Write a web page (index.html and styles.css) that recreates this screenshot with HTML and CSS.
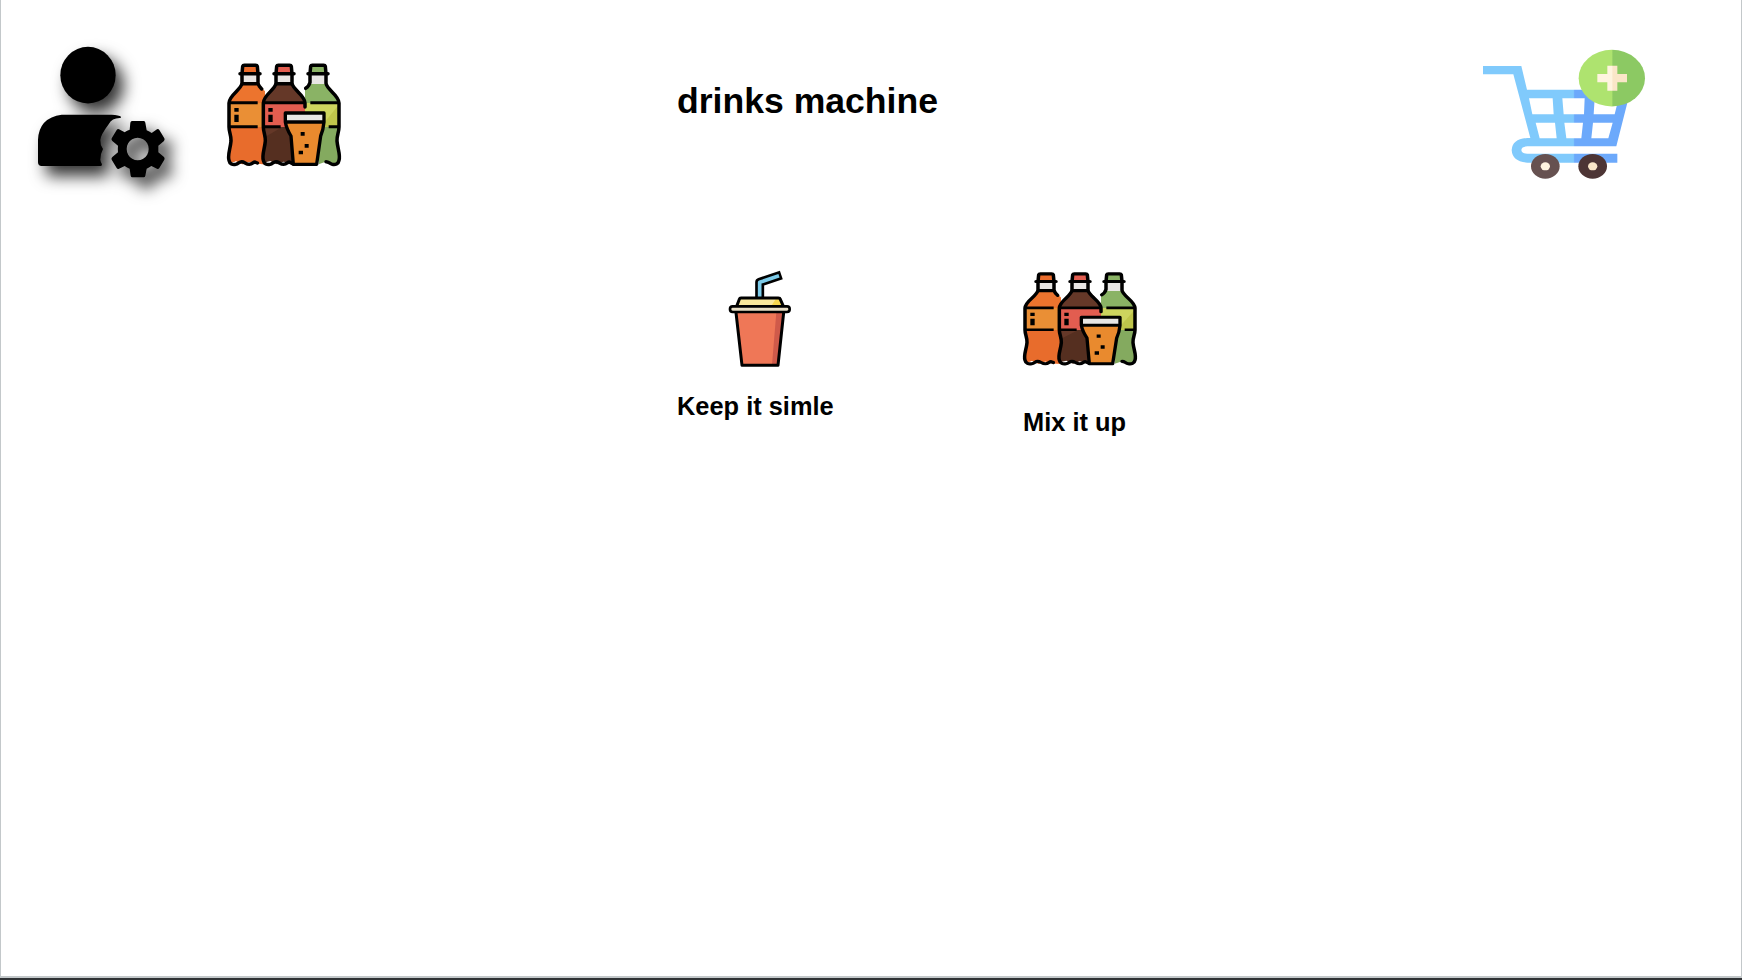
FILE: index.html
```html
<!DOCTYPE html>
<html lang="en">
<head>
<meta charset="utf-8">
<title>drinks machine</title>
<link rel="stylesheet" href="styles.css">
</head>
<body>
<svg class="sprite" aria-hidden="true">
  <symbol id="bottles" viewBox="0 0 420 390" preserveAspectRatio="none">
    <g stroke="none">
      <path fill="#ea6c2c" d="M82 46h46v27H82z"/>
      <path fill="#e8e6e4" d="M84 75h42v27H84z"/>
      <path fill="#ec742e" d="M80 102h50l20 22v219l-30-2-17-6-20 8-20-10-18 7-6-24 6-45-5-40v-75l15-22z"/>
      <path fill="#e86c2c" d="M44 231h106v112l-30-2-17-6-20 8-20-10-18 7-4-24 6-45z"/>
      <path fill="#ea8f35" d="M44 159h102v72H44z"/>
      <path fill="#e25d50" d="M184 46h46v27h-46z"/>
      <path fill="#e8e6e4" d="M185 75h43v27h-43z"/>
      <path fill="#653828" d="M182 102h50l20 20 16 37H144l14-30z"/>
      <path fill="#e25d50" d="M146 159h124v72H146z"/>
      <path fill="#552f20" d="M146 231h90v112l-30-8-20 8-20-10-20 5-1-20 6-40z"/>
      <path fill="#653828" d="M146 231h56l-56 32z"/>
      <path fill="#8ab365" d="M286 46h46v27h-46zM284 102h50l20 22 17 35H270v-38z"/>
      <path fill="#e8e6e4" d="M287 75h43v27h-43z"/>
      <path fill="#cdd45e" d="M270 159h101v72H270z"/>
      <path fill="#bfc54b" d="M371 165v66h-54z"/>
      <path fill="#84aa5f" d="M315 231h56l-5 37 6 70-18 5-18-9-25 9z"/>
    </g>
    <g fill="none" stroke="#000" stroke-width="10.500" stroke-linecap="round" stroke-linejoin="round">
      <path d="M81 71l2-22q1-3 5-3h34q4 0 5 3l2 22M75 71h60M82 101h46"/>
      <path d="M183 71l2-22q1-3 5-3h34q4 0 5 3l2 22M177 71h60M184 101h46"/>
      <path d="M285 71l2-22q1-3 5-3h34q4 0 5 3l2 22M279 71h60"/>
      <path d="M81 75v25C78 120 42 135 42 159v72c0 16 7 25 6 42-2 24-11 42-6 58 2 11 11 14 20 12 9-2 10-8 18-8 9 0 12 8 23 8 10 0 11-7 17-7l7 3M129 75v25c2 8 6 12 11 17"/>
      <path d="M183 75v25C180 120 145 135 145 159v72c0 16 7 25 6 42-2 24-11 42-6 58 2 11 11 14 20 12 9-2 10-8 18-8 9 0 12 8 23 8 10 0 11-7 17-7l8 4M231 75v25c3 20 39 35 39 59v12"/>
      <path d="M285 75v22q-3 12-13 18M333 75v25c3 20 39 35 39 59v72c0 16-7 25-6 42 2 24 11 42 6 58-2 11-11 14-20 12-9-2-10-8-19-8"/>
    </g>
    <path fill="#e98a2e" d="M215 216h111l-8 38-10 89h-74l-9-89z"/>
    <path fill="#e8e6e4" d="M212 189h114v26H212z"/>
    <path fill="none" stroke="#000" stroke-width="10" stroke-linejoin="round" d="M211 189h116v27q-2 23-10 42l-12 85h-70l-7-85q-14-23-17-42zM211 216h116"/>
    <path d="M43 154h85v9H43zM144 154h126v9H144zM286 154h85v9h-85zM43 226h85v9H43zM144 226h53v9h-53zM341 226h30v9h-30zM58 174h13v11H58zM58 194h13v22H58zM160 174h13v11h-13zM160 194h13v22h-13zM257 246h12v11h-12zM269 282h12v11h-12zM251 302h13v11h-13z"/>
  </symbol>
</svg>

<main class="screen">
  <header class="topbar">
    <svg class="admin-icon" viewBox="0 0 510 540">
      <ellipse cx="204" cy="135.500" rx="83" ry="85"/>
      <path d="M125 254h150q22 1 28 6l-1 4q-26-1-36 19-24 32-25 47-1 14 8 27-9 17-8 32 1 8 5 14l-2 5H65q-11 0-11-11v-68q3-66 71-75z"/>
      <path fill-rule="evenodd" d="M336 273h35q5 0 5 5l4 23q8 3 15 8l16-11q4-2 7 2l15 25q2 4-1 8l-17 14v20l17 14q3 3 1 8l-15 25q-3 4-7 2l-17-8q-7 5-14 8l-4 21q-1 5-5 5h-34q-4 0-5-5l-3-21q-8-3-15-8l-17 8q-4 2-7-2l-15-25q-2-5 2-8l17-14q-1-10 0-20l-17-14q-4-3-2-8l15-25q3-4 7-2l17 9q7-6 15-8l2-21q1-5 5-5zM353 323a33 34 0 1 0 .1 0z"/>
    </svg>
    <svg class="brand-icon"><use href="#bottles"/></svg>
    <h1 class="title">drinks machine</h1>
    <svg class="cart-icon" viewBox="0 0 570 465">
      <defs>
        <linearGradient id="blue" gradientUnits="userSpaceOnUse" x1="310" y1="0" x2="314" y2="0">
          <stop offset="0" stop-color="#80cafc"/><stop offset="1" stop-color="#6ca9fb"/>
        </linearGradient>
        <linearGradient id="green" gradientUnits="userSpaceOnUse" x1="425" y1="0" x2="429" y2="0">
          <stop offset="0" stop-color="#aee36f"/><stop offset="1" stop-color="#8cc963"/>
        </linearGradient>
        <linearGradient id="cream" gradientUnits="userSpaceOnUse" x1="425" y1="0" x2="429" y2="0">
          <stop offset="0" stop-color="#fff4df"/><stop offset="1" stop-color="#fae6c8"/>
        </linearGradient>
      </defs>
      <path fill="url(#blue)" fill-rule="evenodd" d="M39 93H154L171 164H482L439 334H172q-17 0-18 11 1 11 18 11H442V383H172q-45-3-47-38 2-33 47-36h9L130 118H39zM177 190l10 48h64l-3-48zM277 190l4 48h61l2-48zM374 190l-3 48h63l12-48zM197 263l12 47h51l-5-47zM283 263l6 47h45l5-47zM369 263l-5 47h51l13-47z"/>
      <ellipse cx="425.500" cy="129.500" rx="99.500" ry="85" fill="url(#green)"/>
      <path fill="url(#cream)" d="M412 92h30v25h29v25h-29v25h-30v-25h-30v-25h30z"/>
      <ellipse cx="226" cy="394" rx="43" ry="37" fill="#665150"/><ellipse cx="226" cy="394" rx="14" ry="12" fill="#fff4df"/>
      <ellipse cx="368" cy="394" rx="43" ry="37" fill="#4d3535"/><ellipse cx="368" cy="394" rx="14" ry="12" fill="#fae6c8"/>
    </svg>
  </header>

  <section class="choices">
    <div class="choice choice-simple">
      <svg class="cup-icon" viewBox="0 0 300 360">
        <path fill="#ef7757" d="M79 157h140l-16 158H97z"/>
        <path fill="#cf5a4a" d="M199 157h20l-16 158h-17z"/>
        <path fill="#fae89c" d="M90 116h120l8 27H80z"/>
        <path fill="#f5d64f" d="M198 116h11l8 20h-32z"/>
        <g fill="none" stroke-linejoin="round" stroke-linecap="round">
          <path stroke="#000" stroke-width="27" stroke-linecap="butt" d="M149 112V67L214 45"/>
          <path stroke="#7ccbe9" stroke-width="11" stroke-linecap="butt" d="M149 112V67L207 47"/>
          <path stroke="#000" stroke-width="9" d="M80 139l8-21q1-4 5-4h112q5 0 6 4l8 18M78 158l18 158H204l17-158"/>
          <rect x="60" y="139" width="179" height="17" rx="8" fill="#e9dfc5" stroke="#000" stroke-width="8"/>
        </g>
      </svg>
      <h2 class="label">Keep it simle</h2>
    </div>
    <div class="choice choice-mix">
      <svg class="mix-icon"><use href="#bottles"/></svg>
      <h2 class="label">Mix it up</h2>
    </div>
  </section>
</main>
<div class="window-edge"></div>
</body>
</html>
```

FILE: styles.css
```css
* { box-sizing: border-box; }

body {
  margin: 0;
  height: 980px;
  overflow: hidden;
  background: #fff;
  color: #000;
  font-family: "Liberation Sans", Arial, sans-serif;
}

svg { display: block; }
.sprite { position: absolute; width: 0; height: 0; }

.screen {
  height: 978px;
  border: solid #c3c8ca;
  border-width: 0 1px 2px;
}

.window-edge { height: 2px; background: #2f3235; }

.topbar {
  display: grid;
  grid-template-columns: 195px 462px 793px 190px;
  align-items: start;
  height: 230px;
  padding: 30px 0 0 19px;
}

.admin-icon {
  width: 170px;
  height: 180px;
  overflow: visible;
  filter: drop-shadow(8px 10px 8px rgba(0, 0, 0, 0.8));
}

.brand-icon { width: 140px; height: 130px; margin-top: 20px; }
.cart-icon { width: 190px; height: 155px; margin-top: 5px; }

.title {
  margin: 50px 0 0;
  font-size: 35.6px;
  line-height: 42px;
}

.choices {
  display: flex;
  padding: 30px 0 0 676px;
}

.choice-simple { width: 333px; }
.cup-icon { width: 100px; height: 120px; margin-left: 32.5px; }
.mix-icon { width: 140px; height: 118px; margin-left: .5px; }

.label {
  margin: 0;
  font-size: 25.4px;
  line-height: 30px;
  white-space: nowrap;
}

.choice-simple .label { margin-top: 11px; }
.choice-mix .label { margin: 29px 0 0 13px; }
```
